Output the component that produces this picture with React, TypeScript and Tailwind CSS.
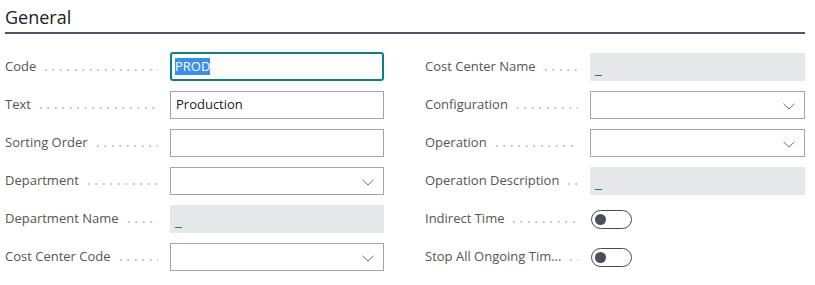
import React from "react";

const font = { fontFamily: '"Segoe UI", "Open Sans", "Noto Sans", sans-serif' };

function Dots() {
  return (
    <div className="flex-1 h-[2px] mt-[5px] mr-[12px] ml-[6px] bg-[radial-gradient(circle,#c4c4c4_0.8px,transparent_1px)] bg-[length:7.5px_2px] bg-repeat-x" />
  );
}

function Label({ text }: { text: string }) {
  return (
    <div className="w-[165px] flex items-center shrink-0 overflow-hidden">
      <span className="text-[13px] text-[#555555] whitespace-nowrap">{text}</span>
      <Dots />
    </div>
  );
}

function Chevron() {
  return (
    <svg width="12" height="7" viewBox="0 0 12 7" className="absolute right-[9px] top-[11px]">
      <path d="M0.5 0.8 L6 6 L11.5 0.8" fill="none" stroke="#707070" strokeWidth="1" />
    </svg>
  );
}

type Kind = "text" | "focus" | "readonly" | "select" | "toggle";

function Field({ label, kind, value }: { label: string; kind: Kind; value?: string }) {
  let control: React.ReactNode = null;
  if (kind === "text") {
    control = (
      <div className="flex-1 h-[28px] border border-[#a5a5a5] flex items-center px-[5px] text-[13px] text-[#212121]">
        {value}
      </div>
    );
  } else if (kind === "focus") {
    control = (
      <div className="flex-1 h-[29px] -mt-[1px] border-2 border-[#0f7f83] rounded-[3px] flex items-center px-[3px] text-[13px]">
        <span className="bg-[#3b8eea] text-white leading-[17px]">{value}</span>
      </div>
    );
  } else if (kind === "readonly") {
    control = (
      <div className="flex-1 h-[28px] bg-[#e6e7e9] flex items-end px-[5px] pb-[5px] text-[13px]">
        <div className="w-[7px] h-[1px] bg-[#0f7f83]" />
      </div>
    );
  } else if (kind === "select") {
    control = (
      <div className="flex-1 h-[28px] border border-[#a5a5a5] relative">
        <Chevron />
      </div>
    );
  } else {
    control = (
      <div className="flex-1 h-[28px] flex items-center pl-[1px]">
        <div className="w-[41px] h-[19px] rounded-full border-[1.5px] border-[#454a58] flex items-center pl-[3px]">
          <div className="w-[11px] h-[11px] rounded-full bg-[#4a4f5e]" />
        </div>
      </div>
    );
  }
  return (
    <div className="flex items-center h-[28px]">
      <Label text={label} />
      {control}
    </div>
  );
}

export default function App() {
  return (
    <div className="w-[815px] h-[285px] bg-white px-[5px]" style={font}>
      <div className="w-[800px] border-b-2 border-[#505668] pt-[5px] pb-[3px]">
        <h2 className="text-[18px] leading-[24px] text-[#212121]">General</h2>
      </div>
      <div className="mt-[19px] grid grid-cols-[379px_380px] gap-x-[41px]">
        <div className="flex flex-col gap-[10px]">
          <Field label="Code" kind="focus" value="PROD" />
          <Field label="Text" kind="text" value="Production" />
          <Field label="Sorting Order" kind="text" value="" />
          <Field label="Department" kind="select" />
          <Field label="Department Name" kind="readonly" />
          <Field label="Cost Center Code" kind="select" />
        </div>
        <div className="flex flex-col gap-[10px]">
          <Field label="Cost Center Name" kind="readonly" />
          <Field label="Configuration" kind="select" />
          <Field label="Operation" kind="select" />
          <Field label="Operation Description" kind="readonly" />
          <Field label="Indirect Time" kind="toggle" />
          <Field label="Stop All Ongoing Tim..." kind="toggle" />
        </div>
      </div>
    </div>
  );
}
